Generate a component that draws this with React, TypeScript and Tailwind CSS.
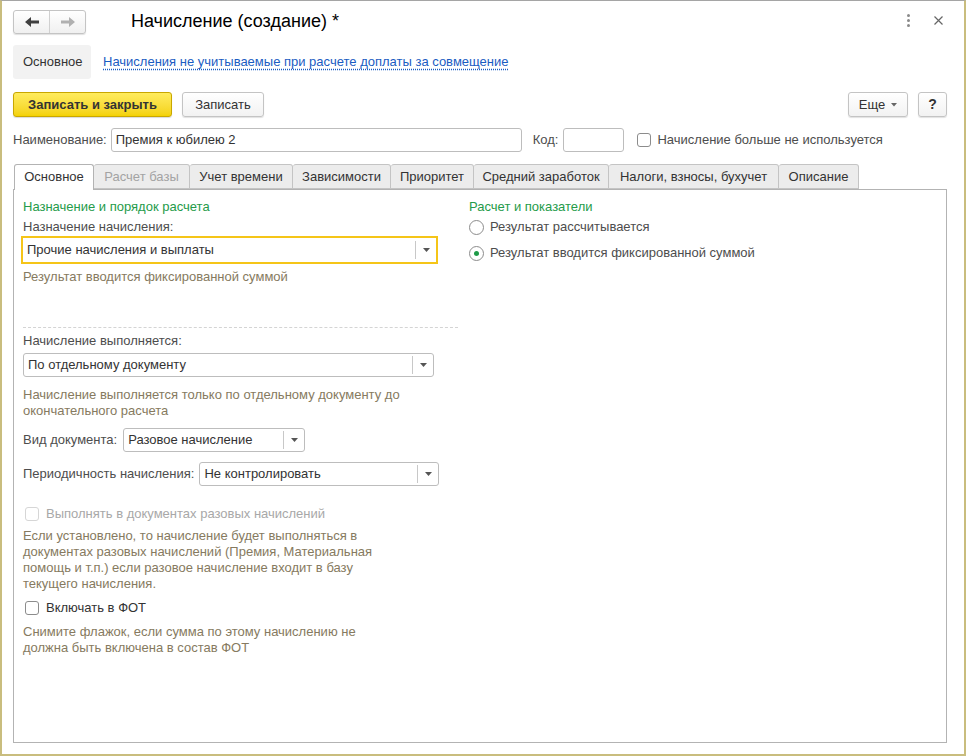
import React from "react";

const font = { fontFamily: '"Liberation Sans", Arial, sans-serif' };

function Arrow() {
  return (
    <svg width="7" height="4" viewBox="0 0 7 4" className="block">
      <path d="M0 0 L7 0 L3.5 4 Z" fill="#555" />
    </svg>
  );
}

function Select({
  w,
  text,
  focused,
}: {
  w: number;
  text: string;
  focused?: boolean;
}) {
  return (
    <div
      className={
        focused
          ? "flex items-center h-[28px] border-2 border-[#f5c518] bg-white"
          : "flex items-center h-[24px] border border-[#bdbdbd] rounded-[3px] bg-white"
      }
      style={{ width: w }}
    >
      <div className="flex-1 pl-[4px] text-[13px] text-[#333] whitespace-nowrap overflow-hidden">
        {text}
      </div>
      <div className="w-px h-[18px] bg-[#c8c8c8]" />
      <div className="w-[20px] flex items-center justify-center">
        <Arrow />
      </div>
    </div>
  );
}

function Checkbox({ disabled }: { disabled?: boolean }) {
  return (
    <div
      className={
        disabled
          ? "w-[14px] h-[14px] rounded-[3px] border border-[#d6d6d6] bg-white"
          : "w-[14px] h-[14px] rounded-[3px] border border-[#8c8c8c] bg-white"
      }
    />
  );
}

function Radio({ checked }: { checked?: boolean }) {
  return (
    <div className="w-[15px] h-[15px] rounded-full border border-[#8c8c8c] bg-white flex items-center justify-center">
      {checked && <div className="w-[5px] h-[5px] rounded-full bg-[#1f9b48]" />}
    </div>
  );
}

const tabs = [
  { t: "Основное", w: 80, active: true },
  { t: "Расчет базы", w: 96, disabled: true },
  { t: "Учет времени", w: 103 },
  { t: "Зависимости", w: 98 },
  { t: "Приоритет", w: 83 },
  { t: "Средний заработок", w: 135 },
  { t: "Налоги, взносы, бухучет", w: 170 },
  { t: "Описание", w: 80 },
];

export default function App() {
  return (
    <div
      className="w-[966px] h-[756px] bg-white border-t border-t-[#a5a5a5] border-l-2 border-r-2 border-b-2 border-l-[#c9bd7e] border-r-[#c9bd7e] border-b-[#c9bd7e] flex flex-col pl-[11px] pr-[17px] text-[13px] text-[#333] overflow-hidden"
      style={font}
    >
      {/* header */}
      <div className="flex items-center h-[24px] mt-[9px]">
        <div className="flex w-[73px] h-[24px] rounded-[3px] border border-[#c4c4c4] bg-gradient-to-b from-white to-[#f0f0f0] shadow-[0_1px_1px_rgba(0,0,0,0.12)]">
          <div className="w-[36px] flex items-center justify-center border-r border-[#d0d0d0]">
            <svg width="14" height="10" viewBox="0 0 14 10">
              <path d="M0 5 L6 0 L6 3.5 L14 3.5 L14 6.5 L6 6.5 L6 10 Z" fill="#404040" />
            </svg>
          </div>
          <div className="flex-1 flex items-center justify-center">
            <svg width="14" height="10" viewBox="0 0 14 10">
              <path d="M14 5 L8 0 L8 3.5 L0 3.5 L0 6.5 L8 6.5 L8 10 Z" fill="#b0b0b0" />
            </svg>
          </div>
        </div>
        <div className="ml-[45px] text-[18px] text-black leading-[24px] -mt-[2px]">
          Начисление (создание) *
        </div>
        <div className="flex-1" />
        <div className="flex flex-col gap-[2px] items-center w-[4px] mr-[24px] -mt-[3px]">
          <div className="w-[3px] h-[3px] rounded-full bg-[#8a8a8a]" />
          <div className="w-[3px] h-[3px] rounded-full bg-[#8a8a8a]" />
          <div className="w-[3px] h-[3px] rounded-full bg-[#8a8a8a]" />
        </div>
        <svg width="9" height="9" viewBox="0 0 9 9" className="mr-[4px] -mt-[3px]">
          <path d="M0.5 0.5 L8.5 8.5 M8.5 0.5 L0.5 8.5" stroke="#666" strokeWidth="1.2" />
        </svg>
      </div>

      {/* group tabs */}
      <div className="flex items-center h-[34px] mt-[11px]">
        <div className="h-[34px] w-[78px] rounded-[3px] bg-[#f2f2f2] flex items-center pl-[10px] text-[#333]">
          Основное
        </div>
        <div className="ml-[12px] text-[#1a5cc2] underline decoration-dotted decoration-[#1a5cc2] underline-offset-[3px]">
          Начисления не учитываемые при расчете доплаты за совмещение
        </div>
      </div>

      {/* command bar */}
      <div className="flex items-center h-[25px] mt-[13px]">
        <div className="h-[25px] w-[159px] rounded-[3px] border border-[#c9a700] bg-gradient-to-b from-[#ffec5c] to-[#f4d200] flex items-center justify-center font-bold text-[#333] shadow-[0_1px_1px_rgba(0,0,0,0.15)]">
          Записать и закрыть
        </div>
        <div className="ml-[10px] h-[25px] w-[82px] rounded-[3px] border border-[#c4c4c4] bg-gradient-to-b from-white to-[#f2f2f2] flex items-center justify-center text-[#333] shadow-[0_1px_1px_rgba(0,0,0,0.12)]">
          Записать
        </div>
        <div className="flex-1" />
        <div className="h-[25px] w-[60px] rounded-[3px] border border-[#c4c4c4] bg-gradient-to-b from-white to-[#f2f2f2] flex items-center justify-center gap-[6px] text-[#333] shadow-[0_1px_1px_rgba(0,0,0,0.12)]">
          <span>Еще</span>
          <svg width="6" height="4" viewBox="0 0 6 4">
            <path d="M0 0 L6 0 L3 3.5 Z" fill="#666" />
          </svg>
        </div>
        <div className="ml-[10px] h-[25px] w-[29px] rounded-[3px] border border-[#c4c4c4] bg-gradient-to-b from-white to-[#f2f2f2] flex items-center justify-center font-bold text-[#333] text-[14px] shadow-[0_1px_1px_rgba(0,0,0,0.12)]">
          ?
        </div>
      </div>

      {/* name row */}
      <div className="flex items-center h-[24px] mt-[11px]">
        <span className="text-[#4d4d4d]">Наименование:</span>
        <div className="ml-[4px] w-[411px] h-[24px] rounded-[3px] border border-[#bdbdbd] flex items-center pl-[4px] text-[#333]">
          Премия к юбилею 2
        </div>
        <span className="ml-[11px] text-[#4d4d4d]">Код:</span>
        <div className="ml-[5px] w-[61px] h-[24px] rounded-[3px] border border-[#bdbdbd]" />
        <div className="ml-[13px]">
          <Checkbox />
        </div>
        <span className="ml-[6px] text-[#4d4d4d]">Начисление больше не используется</span>
      </div>

      {/* tabs */}
      <div className="flex items-end h-[26px] mt-[11px] pl-[1px] relative z-10">
        {tabs.map((tab) => (
          <div
            key={tab.t}
            className={
              tab.active
                ? "h-[26px] bg-white border border-[#b3b3b3] border-b-0 rounded-t-[3px] flex items-center justify-center text-[#333] -mb-px pb-px"
                : tab.disabled
                ? "h-[25px] bg-[#ececec] border border-[#c4c4c4] border-l-0 rounded-t-[3px] flex items-center justify-center text-[#a3a3a3]"
                : "h-[25px] bg-[#ececec] border border-[#c4c4c4] border-l-0 rounded-t-[3px] flex items-center justify-center text-[#333]"
            }
            style={{ width: tab.w }}
          >
            {tab.t}
          </div>
        ))}
      </div>

      {/* panel */}
      <div className="h-[554px] border border-[#b3b3b3] bg-white flex pl-[9px] pt-[9px]">
        {/* left column */}
        <div className="w-[435px] flex flex-col leading-[16px]">
          <div className="text-[#259b4a]">Назначение и порядок расчета</div>
          <div className="mt-[4px] text-[#4d4d4d]">Назначение начисления:</div>
          <div className="mt-[1px] -ml-[2px]">
            <Select w={417} text="Прочие начисления и выплаты" focused />
          </div>
          <div className="mt-[5px] text-[#867a60]">Результат вводится фиксированной суммой</div>
          <div className="mt-[42px] border-t border-dashed border-[#d4d4d4]" />
          <div className="mt-[5px] text-[#4d4d4d]">Начисление выполняется:</div>
          <div className="mt-[4px]">
            <Select w={411} text="По отдельному документу" />
          </div>
          <div className="mt-[10px] text-[#867a60] w-[400px]">
            Начисление выполняется только по отдельному документу до окончательного расчета
          </div>
          <div className="mt-[9px] flex items-center">
            <span className="text-[#4d4d4d]">Вид документа:</span>
            <div className="ml-[6px]">
              <Select w={182} text="Разовое начисление" />
            </div>
          </div>
          <div className="mt-[10px] flex items-center">
            <span className="text-[#4d4d4d]">Периодичность начисления:</span>
            <div className="ml-[5px]">
              <Select w={240} text="Не контролировать" />
            </div>
          </div>
          <div className="mt-[20px] flex items-center h-[16px] pl-[2px]">
            <Checkbox disabled />
            <span className="ml-[7px] text-[#a8a8a8]">Выполнять в документах разовых начислений</span>
          </div>
          <div className="mt-[6px] text-[#867a60] w-[380px]">
            Если установлено, то начисление будет выполняться в документах разовых начислений (Премия, Материальная помощь и т.п.) если разовое начисление входит в базу текущего начисления.
          </div>
          <div className="mt-[8px] flex items-center h-[16px] pl-[2px]">
            <Checkbox />
            <span className="ml-[7px] text-[#333]">Включать в ФОТ</span>
          </div>
          <div className="mt-[8px] text-[#867a60] w-[345px]">
            Снимите флажок, если сумма по этому начислению не должна быть включена в состав ФОТ
          </div>
        </div>

        {/* right column */}
        <div className="ml-[11px] flex flex-col leading-[16px]">
          <div className="text-[#259b4a]">Расчет и показатели</div>
          <div className="mt-[4px] flex items-center h-[16px]">
            <Radio />
            <span className="ml-[6px] text-[#4d4d4d]">Результат рассчитывается</span>
          </div>
          <div className="mt-[10px] flex items-center h-[16px]">
            <Radio checked />
            <span className="ml-[6px] text-[#4d4d4d]">Результат вводится фиксированной суммой</span>
          </div>
        </div>
      </div>
    </div>
  );
}
